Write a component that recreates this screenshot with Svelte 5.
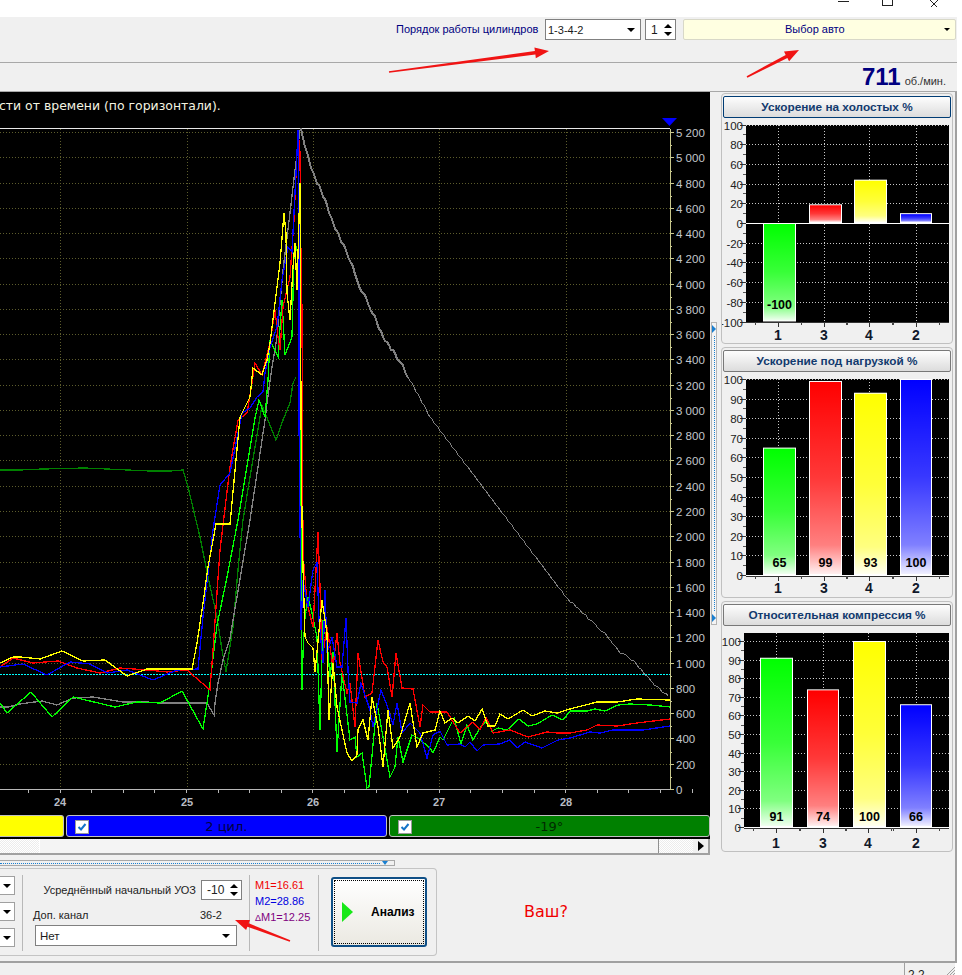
<script>
  // main chart works in page pixels: rpm 0 sits at y=789, 200 rpm = 25.27px
  const rpmY = (v) => Math.round(789 - (v * 25.27) / 200) + 0.5
  const rpmTicks = Array.from({ length: 27 }, (_, i) => i * 200)
  const timeTicks = [
    { x: 60, t: 24 },
    { x: 187, t: 25 },
    { x: 313, t: 26 },
    { x: 439, t: 27 },
    { x: 566, t: 28 },
  ]
  const subTicks = Array.from({ length: 23 }, (_, i) => 28 + i * 31.6)
  const fmt = (v) => (v >= 1000 ? Math.floor(v / 1000) + " " + String(v % 1000).padStart(3, "0") : String(v))

  const series = [
    {
      color: "#008000",
      pts: "0,470 20,470 43,469 85,468 107,469 128,470 150,471 170,471 183,470 188,487 200,537 208,577 217,617 222,650 226,672 233,627 238,570 243,520 252,465 262,405 268,420 276,440 283,420 290,403 293,383 296,377",
    },
    {
      color: "#808080",
      pts: "0,707 8,707 20,704 42,701 57,705 73,698 93,697 123,702 147,702 160,703 187,703 207,703 214,715 215,703 218,683 223,660 230,638 250,520 265,420 267,403 272,367 277,337 283,270 290,213 295,170 300,130",
    },
    {
      color: "#00ff00",
      pts: "0,703 7,713 31,692 52,717 73,697 115,707 137,702 160,703 182,691 203,729 210,683 217,625 227,577 238,520 255,418 259,400 265,417 268,380 270,340 278,357 282,300 285,355 292,337 294,253 296,247 298,253 300,400 302,690 303,653 305,617 308,597 312,613 317,637 320,730 323,620 328,653 330,677 333,652 337,752 342,673 350,740 355,737 357,757 362,753 367,788 369,787 377,703 390,777 395,767 398,737 403,762 412,735 418,738 430,748 433,753 440,737 443,740 454,718 461,744 467,725 473,740 480,728 487,720 492,731 498,728 507,730 519,719 528,726 537,724 552,715 563,720 570,711 587,711 595,709 605,711 618,705 630,704 650,705 670,707",
    },
    {
      color: "#ff0000",
      pts: "0,667 13,658 33,663 58,661 77,668 100,673 120,668 147,670 167,672 187,670 210,690 213,650 220,550 230,467 238,420 247,413 252,383 255,363 262,375 270,343 275,310 278,337 280,350 283,307 290,277 294,220 298,130 300,153 301,263 302,310 303,553 307,603 313,627 318,532 320,587 322,660 327,627 333,667 337,633 340,663 347,693 350,683 355,727 358,653 365,697 372,693 378,640 383,662 387,667 392,697 396,653 402,688 413,689 420,727 423,705 430,712 447,712 460,733 473,722 480,730 486,717 493,733 510,730 528,737 547,732 557,733 570,733 587,730 597,725 617,726 637,723 670,719",
    },
    {
      color: "#0000ff",
      pts: "0,667 23,664 47,675 70,662 90,664 107,673 127,670 153,680 177,670 198,669 203,617 213,530 220,485 230,473 242,413 250,408 257,397 263,392 265,373 270,347 277,327 282,280 288,247 292,252 297,153 298,130 299,220 299,420 300,520 301,630 303,580 308,607 313,570 317,562 319,620 323,663 325,590 327,653 332,637 337,667 342,667 346,618 348,670 350,702 357,703 361,683 370,710 373,727 381,690 387,705 393,725 397,703 402,733 410,723 420,733 427,758 433,735 440,731 447,745 460,744 465,747 470,742 477,751 483,745 500,744 510,740 517,748 525,742 542,748 558,740 570,738 590,732 600,733 613,730 643,730 670,726",
    },
    {
      color: "#ffff00",
      pts: "0,663 13,657 20,657 40,659 62,651 83,661 105,660 127,676 147,669 167,669 192,669 197,643 203,603 208,567 216,524 230,524 240,417 250,397 253,368 262,375 267,360 270,343 275,303 280,263 284,213 286,233 287,293 290,320 293,267 295,243 297,290 300,183 301,413 302,520 303,567 305,637 308,643 313,648 315,672 322,600 327,633 329,720 333,663 337,707 347,753 352,761 357,755 358,730 363,720 368,740 372,697 378,727 383,767 388,710 393,748 400,737 410,703 417,747 423,733 435,730 440,711 445,723 452,718 458,723 468,716 475,721 482,709 488,726 495,726 500,714 508,719 523,710 532,716 545,711 557,713 570,709 597,702 617,702 637,699 670,700",
    },
  ]

  // the gray run-down curve: thick and noisy at the start, thin at the end
  const decayKnots = [
    [301, 130], [307, 153], [313, 173], [325, 200], [333, 223], [347, 253], [360, 287], [373, 313],
    [383, 337], [397, 357], [410, 380], [430, 417], [500, 510], [566, 597], [590, 620], [603, 632],
    [620, 652], [633, 660], [647, 677], [660, 690], [670, 697],
  ]
  function decay(from, to, amp) {
    const out = []
    for (let i = 0; i < decayKnots.length - 1; i++) {
      const [x1, y1] = decayKnots[i]
      const [x2, y2] = decayKnots[i + 1]
      if (x2 <= from || x1 >= to) continue
      const steps = Math.max(1, Math.round((x2 - x1) / 2))
      for (let s = 0; s < steps; s++) {
        const x = x1 + ((x2 - x1) * s) / steps
        const y = y1 + ((y2 - y1) * s) / steps
        out.push(Math.round(x) + "," + Math.round(y + amp * Math.sin(x * 7.3)))
      }
    }
    return out.join(" ")
  }

  // side bar charts, again in page pixels
  const tones = { g: "#00ff00", r: "#ff0000", y: "#ffff00", b: "#0000ff" }
  const panels = [
    {
      title: "Ускорение на холостых %",
      focused: true,
      top: 120,
      h: 222,
      plot: [746, 125, 949, 322],
      zero: 223,
      unit: 0.985,
      scale: [-100, -80, -60, -40, -20, 0, 20, 40, 60, 80, 100],
      minor: 9.85,
      labelY: 309,
      xLabelY: 340,
      xs: [778, 824, 869, 916],
      cols: [[763, 796], [809, 842], [854, 887], [900, 932]],
      bars: [
        { name: "1", v: -100, tone: "g", show: true },
        { name: "3", v: 19, tone: "r" },
        { name: "4", v: 44, tone: "y" },
        { name: "2", v: 10, tone: "b" },
      ],
    },
    {
      title: "Ускорение под нагрузкой %",
      top: 374,
      h: 222,
      plot: [746, 379, 949, 576],
      zero: 575,
      unit: 1.96,
      scale: [0, 10, 20, 30, 40, 50, 60, 70, 80, 90, 100],
      minor: 9.8,
      labelY: 567,
      xLabelY: 593,
      xs: [778, 824, 869, 916],
      cols: [[763, 796], [809, 842], [854, 887], [900, 932]],
      bars: [
        { name: "1", v: 65, tone: "g", show: true },
        { name: "3", v: 99, tone: "r", show: true },
        { name: "4", v: 93, tone: "y", show: true },
        { name: "2", v: 100, tone: "b", show: true },
      ],
    },
    {
      title: "Относительная компрессия %",
      top: 628,
      h: 222,
      plot: [744, 633, 949, 828],
      zero: 827,
      unit: 1.86,
      scale: [0, 10, 20, 30, 40, 50, 60, 70, 80, 90, 100],
      minor: 9.3,
      labelY: 821,
      xLabelY: 848,
      xs: [776, 823, 868, 916],
      cols: [[760, 793], [807, 839], [853, 886], [900, 932]],
      bars: [
        { name: "1", v: 91, tone: "g", show: true },
        { name: "3", v: 74, tone: "r", show: true },
        { name: "4", v: 100, tone: "y", show: true },
        { name: "2", v: 66, tone: "b", show: true },
      ],
    },
  ]

  function minorTicks(p) {
    const out = []
    for (let y = p.zero; y >= p.plot[1] - 1; y -= p.minor) out.push(Math.round(y) + 0.5)
    for (let y = p.zero + p.minor; y <= p.plot[3] + 1; y += p.minor) out.push(Math.round(y) + 0.5)
    return out
  }
  const rowY = (p, v) => Math.round(p.zero - v * p.unit) + 0.5

  // red hand-drawn annotation arrows
  function arrow(x1, y1, x2, y2) {
    const a = Math.atan2(y2 - y1, x2 - x1)
    const nx = -Math.sin(a)
    const ny = Math.cos(a)
    const bx = x2 - Math.cos(a) * 14
    const by = y2 - Math.sin(a) * 14
    const p = (x, y) => x.toFixed(1) + "," + y.toFixed(1)
    return [
      p(x1 + nx * 0.8, y1 + ny * 0.8),
      p(bx + nx * 1.8, by + ny * 1.8),
      p(bx + nx * 5.5, by + ny * 5.5),
      p(x2, y2),
      p(bx - nx * 5.5, by - ny * 5.5),
      p(bx - nx * 1.8, by - ny * 1.8),
      p(x1 - nx * 0.8, y1 - ny * 0.8),
    ].join(" ")
  }
  const arrows = [arrow(389, 72, 549, 51), arrow(747, 77, 799, 50), arrow(290, 941, 235, 920)]
</script>

<div class="app">
  <div class="titlebar">
    <span class="win-min"></span>
    <span class="win-max"></span>
    <svg class="win-close" width="12" height="7" viewBox="0 0 12 7"><path d="M1 -1 L9 7 M11 -1 L3 7" stroke="#222" fill="none" /></svg>
  </div>

  <div class="toolbar">
    <span class="order-label">Порядок работы цилиндров</span>
    <div class="combo order"><span>1-3-4-2</span><i class="down"></i></div>
    <div class="spin one"><span>1</span><b><i class="up"></i><i class="down"></i></b></div>
    <div class="auto"><span>Выбор авто</span><i class="down small"></i></div>
  </div>

  <div class="rpmbar">
    <strong>711</strong><span>об./мин.</span>
  </div>

  <div class="body">
    <div class="middle">
      <div class="chart-col">
        <div class="chart">
          <svg class="plot" width="710" height="723" viewBox="0 92 710 723">
            {#each rpmTicks as v}
              <line x1="0" x2="670" y1={rpmY(v)} y2={rpmY(v)} class="grid" />
              <line x1="670" x2="674" y1={rpmY(v)} y2={rpmY(v)} class="axis" />
              <line x1="670" x2="672" y1={rpmY(v) - 12} y2={rpmY(v) - 12} class="axis" />
              <text x="676" y={rpmY(v) + 4} class="rpm-label">{fmt(v)}</text>
            {/each}
            {#each timeTicks as tick}
              <line x1={tick.x + 0.5} x2={tick.x + 0.5} y1="129" y2="789" class="grid" />
              <text x={tick.x} y="806" class="time-label">{tick.t}</text>
            {/each}
            {#each subTicks as x}
              <line x1={Math.round(x) + 0.5} x2={Math.round(x) + 0.5} y1="789" y2="793" class="tick" />
            {/each}
            <line x1="0" x2="670" y1="128.5" y2="128.5" class="top-line" />
            <line x1="670.5" x2="670.5" y1="129" y2="789" class="axis" />
            <line x1="0" x2="670" y1="789.5" y2="789.5" class="tick" />
            <polygon points="662,118 677,118 669.5,126" fill="#0000ff" />
            <line x1="0" x2="670" y1="674.5" y2="674.5" class="cyan" />

            {#each series as s}
              <polyline points={s.pts} fill="none" stroke={s.color} class="trace" />
            {/each}
            <polyline points={decay(300, 400, 1.6)} fill="none" stroke="#808080" stroke-width="2" shape-rendering="crispEdges" />
            <polyline points={decay(395, 671, 0.8)} fill="none" stroke="#808080" stroke-width="1" shape-rendering="crispEdges" />
            <text x="-1" y="110" class="caption">сти от времени (по горизонтали).</text>
          </svg>
        </div>
        <div class="channels">
          <div class="chan yellow"></div>
          <div class="chan blue">
            <span class="check"><svg width="10" height="10" viewBox="0 0 10 10"><path d="M1.5 5 L4 7.5 L8.5 2" fill="none" stroke="#1473c8" stroke-width="2" /></svg></span>
            <span class="chan-text">2 цил.</span>
          </div>
          <div class="chan green">
            <span class="check"><svg width="10" height="10" viewBox="0 0 10 10"><path d="M1.5 5 L4 7.5 L8.5 2" fill="none" stroke="#1473c8" stroke-width="2" /></svg></span>
            <span class="chan-text">-19°</span>
          </div>
        </div>
        <div class="hscroll">
          <div class="track short"></div>
          <div class="thumb"></div>
          <div class="track rest"></div>
          <div class="scroll-btn"><i class="right"></i></div>
        </div>
      </div>

      <div class="vsplit">
        <i class="right tiny"></i>
        <span class="dots-v"></span>
        <i class="right tiny"></i>
      </div>

      <div class="side">
        {#each panels as p}
          <section class="panel">
            <div class="panel-head" class:focused={p.focused}>{p.title}</div>
            <svg width="232" height={p.h} viewBox="721 {p.top} 232 {p.h}">
              <defs>
                {#each Object.entries(tones) as [key, c]}
                  <linearGradient id="fill-{p.top}-{key}" x1="0" x2="0" y1="0" y2="1">
                    <stop offset="0" stop-color={c} />
                    <stop offset="0.5" stop-color={c} stop-opacity="0.78" />
                    <stop offset="0.85" stop-color={c} stop-opacity="0.5" />
                    <stop offset="1" stop-color={c} stop-opacity="0.06" />
                  </linearGradient>
                {/each}
              </defs>
              <rect x={p.plot[0]} y={p.plot[1]} width={p.plot[2] - p.plot[0]} height={p.plot[3] - p.plot[1]} fill="#000" />
              {#each minorTicks(p) as y}
                <line x1={p.plot[0] - 3} x2={p.plot[0]} y1={y} y2={y} stroke="#555" />
              {/each}
              {#each p.scale as v}
                <line x1={p.plot[0]} x2={p.plot[2]} y1={rowY(p, v)} y2={rowY(p, v)} class="bar-grid" />
                <line x1={p.plot[0] - 6} x2={p.plot[0]} y1={rowY(p, v)} y2={rowY(p, v)} stroke="#333" />
                <text x={p.plot[0] - 3} y={rowY(p, v) + 4} class="scale">{v}</text>
              {/each}
              {#each p.xs as x}
                <line x1={x + 0.5} x2={x + 0.5} y1={p.plot[1]} y2={p.plot[3]} class="bar-grid" />
              {/each}
              <line x1={p.plot[0]} x2={p.plot[2]} y1={p.plot[3] + 0.5} y2={p.plot[3] + 0.5} stroke="#333" />
              {#each p.xs as x, i}
                <line x1={x + 0.5} x2={x + 0.5} y1={p.plot[3]} y2={p.plot[3] + 5} stroke="#333" />
                <line x1={x + 23.5} x2={x + 23.5} y1={p.plot[3]} y2={p.plot[3] + 3} stroke="#444" />
                <line x1={x - 22.5} x2={x - 22.5} y1={p.plot[3]} y2={p.plot[3] + 3} stroke="#444" />
                <text x={x} y={p.xLabelY} class="bar-name">{p.bars[i].name}</text>
              {/each}
              {#each p.bars as bar, i}
                <rect
                  x={p.cols[i][0]}
                  y={bar.v >= 0 ? p.zero - bar.v * p.unit : p.zero}
                  width={p.cols[i][1] - p.cols[i][0]}
                  height={Math.abs(bar.v) * p.unit}
                  fill="#fff"
                />
                <rect
                  x={p.cols[i][0] + 1}
                  y={(bar.v >= 0 ? p.zero - bar.v * p.unit : p.zero) + 1}
                  width={p.cols[i][1] - p.cols[i][0] - 2}
                  height={Math.abs(bar.v) * p.unit - 2}
                  fill="url(#fill-{p.top}-{bar.tone})"
                />
                {#if bar.show}
                  <text x={(p.cols[i][0] + p.cols[i][1]) / 2} y={p.labelY} class="bar-value">{bar.v}</text>
                {/if}
              {/each}
              <line x1={p.plot[0]} x2={p.plot[2]} y1={p.zero + 0.5} y2={p.zero + 0.5} stroke="#fff" />
            </svg>
          </section>
        {/each}
      </div>
    </div>

    <div class="hsplit">
      <span class="dots-h"></span>
      <i class="down blue-tri"></i>
    </div>

    <div class="lower">
      <div class="controls">
        <div class="cut-combos">
          <div class="cut"><i class="down"></i></div>
          <div class="cut"><i class="down"></i></div>
          <div class="cut"><i class="down"></i></div>
        </div>
        <span class="vline first"></span>
        <div class="uoz">
          <div class="uoz-row">
            <span>Усреднённый начальный УОЗ</span>
            <div class="spin small-spin"><span>-10</span><b><i class="up"></i><i class="down"></i></b></div>
          </div>
          <div class="extra-row"><span>Доп. канал</span><span>36-2</span></div>
          <div class="combo extra"><span>Нет</span><i class="down"></i></div>
        </div>
        <span class="vline"></span>
        <div class="marks">
          <span class="m1">M1=16.61</span>
          <span class="m2">M2=28.86</span>
          <span class="dm"><small>Δ</small>M1=12.25</span>
        </div>
        <span class="vline"></span>
        <button class="run">
          <span class="run-inner">
            <i class="play"></i>
            <span>Анализ</span>
          </span>
        </button>
      </div>
      <span class="note">Ваш?</span>
    </div>
  </div>

  <div class="status">
    <div class="status-cell"><span>2.2</span></div>
    <svg class="grip" width="9" height="9" viewBox="0 0 9 9"><path d="M9 1 L1 9 M9 4 L4 9 M9 7 L7 9" stroke="#a0a0a0" fill="none" /></svg>
  </div>

  <svg class="marks-overlay" width="962" height="975">
    {#each arrows as a}
      <polygon points={a} fill="#f01414" />
    {/each}
  </svg>
</div>

<style>
  :global(body) {
    margin: 0;
    background: #fff;
  }

  .app {
    position: relative;
    width: 962px;
    height: 975px;
    overflow: hidden;
    display: flex;
    flex-direction: column;
    font-family: "Liberation Sans", Arial, sans-serif;
    font-size: 12px;
    color: #1a1a1a;
  }

  i {
    display: block;
  }

  .down,
  .up {
    width: 0;
    height: 0;
    border-left: 4px solid transparent;
    border-right: 4px solid transparent;
  }
  .down {
    border-top: 4px solid #000;
  }
  .up {
    border-bottom: 4px solid #000;
  }
  .down.small {
    border-left-width: 3px;
    border-right-width: 3px;
    border-top-width: 3px;
  }
  .right {
    width: 0;
    height: 0;
    border-top: 5px solid transparent;
    border-bottom: 5px solid transparent;
    border-left: 6px solid #000;
  }

  /* title bar, cut off at the top of the picture */
  .titlebar {
    height: 17px;
    background: #fff;
    position: relative;
    display: flex;
    flex-shrink: 0;
  }
  .win-min {
    margin-left: 838px;
    width: 11px;
    height: 1px;
    margin-top: 1px;
    background: #222;
  }
  .win-max {
    margin-left: 33px;
    width: 9px;
    height: 5px;
    border: 1px solid #222;
    border-top: 0;
  }
  .win-close {
    margin-left: 35px;
  }

  .toolbar {
    width: 957px;
    height: 46px;
    box-sizing: border-box;
    background: #f0f0f0;
    border-bottom: 1px solid #a8a8a8;
    display: flex;
    align-items: flex-start;
    padding: 2px 0 0 396px;
    flex-shrink: 0;
  }
  .order-label {
    width: 149px;
    line-height: 21px;
    font-size: 11px;
    color: #000080;
    white-space: nowrap;
  }
  .combo {
    height: 21px;
    box-sizing: border-box;
    background: #fff;
    border: 1px solid #808080;
    display: flex;
    align-items: center;
    justify-content: space-between;
    padding: 0 5px 0 2px;
    font-size: 11px;
  }
  .combo.order {
    width: 96px;
  }
  .spin {
    height: 21px;
    box-sizing: border-box;
    background: #fff;
    border: 1px solid #808080;
    display: flex;
    align-items: center;
    justify-content: space-between;
    padding: 0 3px 0 5px;
  }
  .spin b {
    display: flex;
    flex-direction: column;
    gap: 4px;
  }
  .spin.one {
    width: 31px;
    margin-left: 4px;
  }
  .auto {
    margin-left: 7px;
    width: 273px;
    height: 21px;
    box-sizing: border-box;
    background: #ffffe1;
    border: 1px solid #d8d8c8;
    border-radius: 2px;
    color: #000080;
    font-size: 11px;
    line-height: 18px;
    display: flex;
    align-items: flex-start;
    padding: 0 5px 0 101px;
    justify-content: space-between;
  }
  .auto .down {
    margin-top: 8px;
  }

  .rpmbar {
    width: 957px;
    height: 29px;
    box-sizing: border-box;
    background: #f0f0f0;
    border-bottom: 1px solid #a8a8a8;
    padding-right: 11px;
    display: flex;
    justify-content: flex-end;
    align-items: baseline;
    gap: 4px;
    flex-shrink: 0;
  }
  .rpmbar strong {
    font-size: 24px;
    line-height: 28px;
    color: #000080;
  }
  .rpmbar span {
    font-size: 11px;
    color: #333;
  }

  .body {
    width: 955px;
    height: 869px;
    background: #f0f0f0;
    border-right: 2px solid #a0a0a0;
    border-bottom: 2px solid #a0a0a0;
    flex-shrink: 0;
    display: flex;
    flex-direction: column;
  }

  .middle {
    display: flex;
    height: 763px;
  }

  .chart-col {
    width: 710px;
    flex-shrink: 0;
    display: flex;
    flex-direction: column;
  }
  .chart {
    height: 723px;
    background: #000;
  }
  .plot {
    display: block;
  }
  .grid {
    stroke: #5c5c2c;
    stroke-dasharray: 1 2;
  }
  .axis {
    stroke: #c8c88c;
  }
  .tick {
    stroke: #b8b8b8;
  }
  .top-line {
    stroke: #e8e8e8;
  }
  .cyan {
    stroke: #00ffff;
    stroke-dasharray: 2 1;
  }
  .trace {
    stroke-width: 1.3;
    shape-rendering: crispEdges;
  }
  .rpm-label {
    fill: #c4c8cc;
    font-size: 11.5px;
  }
  .time-label {
    fill: #b8bcc4;
    font-size: 11px;
    font-weight: bold;
    text-anchor: middle;
  }
  .caption {
    fill: #f4f4e0;
    font-family: "DejaVu Sans", sans-serif;
    font-size: 12.45px;
  }

  .channels {
    height: 24px;
    box-sizing: border-box;
    background: #000;
    display: flex;
    gap: 2px;
    padding-bottom: 2px;
  }
  .chan {
    height: 22px;
    box-sizing: border-box;
    border: 1px solid #c0c0c0;
    border-radius: 3px;
    position: relative;
    display: flex;
    align-items: center;
    justify-content: center;
    font-family: "DejaVu Sans", sans-serif;
    font-size: 13px;
  }
  .chan.yellow {
    width: 64px;
    background: #ffff00;
    border-left: 0;
    border-radius: 0 3px 3px 0;
  }
  .chan.blue {
    width: 322px;
    background: #0000ff;
    color: #000040;
  }
  .chan.green {
    width: 322px;
    background: #008000;
    color: #002a00;
  }
  .check {
    position: absolute;
    left: 8px;
    top: 4px;
    width: 12px;
    height: 12px;
    background: #fff;
    border: 1px solid #9a9a9a;
    display: flex;
    align-items: center;
    justify-content: center;
  }

  .hscroll {
    height: 16px;
    display: flex;
    box-sizing: border-box;
    border-bottom: 2px solid #a0a0a0;
  }
  .track {
    background: repeating-conic-gradient(#fff 0 25%, #ececec 0 50%) 0 0 / 2px 2px;
  }
  .track.short {
    width: 39px;
  }
  .thumb {
    width: 620px;
    background: #f4f4f4;
    border-left: 1px solid #fff;
    border-right: 1px solid #909090;
    box-sizing: border-box;
  }
  .track.rest {
    width: 34px;
  }
  .scroll-btn {
    width: 17px;
    background: #f0f0f0;
    border-right: 2px solid #a0a0a0;
    box-sizing: border-box;
    display: flex;
    align-items: center;
    justify-content: center;
  }

  .vsplit {
    align-self: center;
    margin: 0 0 0 1px;
    width: 6px;
    height: 303px;
    box-sizing: border-box;
    border: 1px solid #b4b4b4;
    background: #f4f4f4;
    display: flex;
    flex-direction: column;
    align-items: center;
    justify-content: space-between;
    padding: 2px 0;
    flex-shrink: 0;
  }
  .dots-v {
    flex: 1;
    margin: 3px 0;
    border-left: 1px dotted #1a7fd0;
  }
  .right.tiny {
    border-top-width: 4px;
    border-bottom-width: 4px;
    border-left: 4px solid #1a7fd0;
  }

  .side {
    margin-left: 4px;
    width: 232px;
    display: flex;
    flex-direction: column;
    gap: 3px;
    padding-top: 1px;
  }
  .panel {
    height: 251px;
    box-sizing: border-box;
    border: 1px solid #c0c0c0;
    border-radius: 4px;
    overflow: hidden;
  }
  .panel svg {
    display: block;
    margin-left: -1px;
  }
  .panel-head {
    margin: 2px 1px 2px 1px;
    height: 22px;
    box-sizing: border-box;
    border: 1px solid #787878;
    border-radius: 2px;
    background: linear-gradient(#fdfdfd, #dcdcdc);
    color: #123a6e;
    font-size: 11.8px;
    font-weight: bold;
    line-height: 20px;
    text-align: center;
  }
  .panel-head.focused {
    border: 1px solid #003c74;
  }
  .bar-grid {
    stroke: #c8c8c8;
    stroke-dasharray: 1 2;
  }
  .scale {
    font-size: 11.5px;
    text-anchor: end;
    fill: #222;
  }
  .bar-name {
    font-size: 14px;
    font-weight: bold;
    text-anchor: middle;
    fill: #10182a;
  }
  .bar-value {
    font-size: 12.5px;
    font-weight: bold;
    text-anchor: middle;
    fill: #000;
  }

  .hsplit {
    margin-top: 5px;
    width: 395px;
    height: 6px;
    box-sizing: border-box;
    border: 1px solid #a8a8a8;
    border-left: 0;
    position: relative;
    display: flex;
    align-items: center;
    padding-right: 6px;
    gap: 2px;
  }
  .dots-h {
    flex: 1;
    border-top: 1px dotted #1a7fd0;
  }
  .down.blue-tri {
    border-top-color: #1a7fd0;
    border-left-width: 3px;
    border-right-width: 3px;
  }

  .lower {
    flex: 1;
    position: relative;
  }
  .controls {
    margin-top: 2px;
    width: 437px;
    height: 88px;
    box-sizing: border-box;
    border: 1px solid #c4c4c4;
    border-left: 0;
    border-radius: 0 4px 4px 0;
    display: flex;
    align-items: stretch;
  }
  .cut-combos {
    width: 15px;
    display: flex;
    flex-direction: column;
    gap: 7px;
    padding-top: 7px;
  }
  .cut {
    width: 15px;
    height: 19px;
    box-sizing: border-box;
    background: #fff;
    border: 1px solid #a0a0a0;
    border-left: 0;
    display: flex;
    align-items: center;
    justify-content: flex-end;
    padding-right: 3px;
  }
  .vline {
    width: 1px;
    margin: 6px 0 4px;
    background: #b8b8b8;
    flex-shrink: 0;
  }
  .vline.first {
    margin-left: 7px;
  }
  .uoz {
    width: 226px;
    position: relative;
    padding: 11px 0 0 0;
    font-size: 11px;
  }
  .uoz-row {
    display: flex;
    align-items: center;
    justify-content: flex-end;
    padding-right: 7px;
    gap: 5px;
    color: #222;
  }
  .small-spin {
    width: 41px;
    height: 20px;
    box-sizing: border-box;
    font-size: 12px;
  }
  .extra-row {
    margin: 8px 0 0 10px;
    width: 189px;
    display: flex;
    justify-content: space-between;
    line-height: 14px;
    color: #222;
  }
  .combo.extra {
    margin: 3px 0 0 12px;
    width: 202px;
    padding: 0 6px 0 4px;
    font-size: 11.5px;
  }
  .marks {
    width: 68px;
    box-sizing: border-box;
    padding: 8px 0 0 5px;
    display: flex;
    flex-direction: column;
    font-size: 11px;
    line-height: 16px;
    white-space: nowrap;
  }
  .m1 {
    color: #f00000;
  }
  .m2 {
    color: #0000e0;
  }
  .dm {
    color: #800080;
  }
  .dm small {
    font-size: 9px;
  }
  .run {
    margin: 8px 0 0 12px;
    width: 96px;
    height: 70px;
    padding: 1px;
    box-sizing: border-box;
    border: 2px solid #0f4f86;
    border-radius: 3px;
    background: linear-gradient(#ffffff, #ebe9e2);
    font: inherit;
  }
  .run-inner {
    display: flex;
    height: 100%;
    box-sizing: border-box;
    border: 1px dotted #000;
    align-items: center;
    padding-left: 7px;
    font-weight: bold;
    font-size: 12px;
    color: #000;
  }
  .play {
    width: 0;
    height: 0;
    border-top: 10px solid transparent;
    border-bottom: 10px solid transparent;
    border-left: 11px solid #18e818;
    margin-right: 18px;
  }
  .note {
    position: absolute;
    left: 524px;
    top: 36px;
    color: #f00000;
    font-family: "DejaVu Sans", sans-serif;
    font-size: 16px;
  }

  .status {
    width: 955px;
    background: #f0f0f0;
    flex: 1;
    display: flex;
    justify-content: flex-end;
    overflow: hidden;
    position: relative;
  }
  .status-cell {
    width: 47px;
    border-left: 1px solid #a0a0a0;
    padding: 5px 0 0 3px;
    font-size: 12px;
    line-height: 14px;
  }
  .grip {
    position: absolute;
    right: 0;
    bottom: 0;
  }

  .marks-overlay {
    position: absolute;
    left: 0;
    top: 0;
    pointer-events: none;
  }
</style>
